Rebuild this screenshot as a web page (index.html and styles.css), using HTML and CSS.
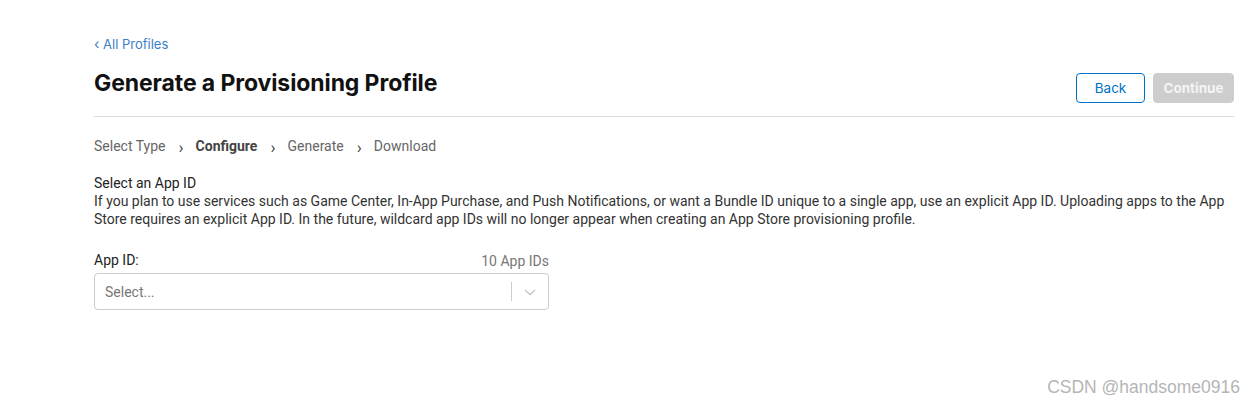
FILE: index.html
```html
<!DOCTYPE html>
<html>
<head>
<meta charset="utf-8">
<link rel="stylesheet" href="styles.css">
</head>
<body>
<div class="page">
  <a class="back-link" href="#"><span class="chev">‹</span> All Profiles</a>
  <div class="header">
    <h1 class="title">Generate a Provisioning Profile</h1>
    <div class="actions">
      <button class="btn btn-back">Back</button>
      <button class="btn btn-continue">Continue</button>
    </div>
  </div>
  <div class="steps">
    <span class="step">Select Type</span>
    <span class="sep">›</span>
    <span class="step current">Configure</span>
    <span class="sep">›</span>
    <span class="step">Generate</span>
    <span class="sep">›</span>
    <span class="step">Download</span>
  </div>
  <div class="section">
    <div class="section-title">Select an App ID</div>
    <p class="desc">If you plan to use services such as Game Center, In-App Purchase, and Push Notifications, or want a Bundle ID unique to a single app, use an explicit App ID. Uploading apps to the App Store requires an explicit App ID. In the future, wildcard app IDs will no longer appear when creating an App Store provisioning profile.</p>
  </div>
  <div class="field">
    <div class="field-head">
      <span class="label">App ID:</span>
      <span class="count">10 App IDs</span>
    </div>
    <div class="select">
      <span class="placeholder">Select...</span>
      <span class="indicator">
        <span class="divider"></span>
        <svg class="arrow" width="14" height="10" viewBox="0 0 14 10"><path d="M2 3 L7 7.5 L12 3" fill="none" stroke="#c8c8c8" stroke-width="1.5"/></svg>
      </span>
    </div>
  </div>
</div>
<div class="watermark">CSDN @handsome0916</div>
</body>
</html>
```
FILE: styles.css
```css
html, body {
  margin: 0;
  padding: 0;
  background: #fff;
}
body {
  font-family: Roboto, "Liberation Sans", sans-serif;
  color: #333;
  width: 1255px;
  height: 405px;
  position: relative;
  overflow: hidden;
}
.page {
  padding: 36px 21px 0 94px;
}
.back-link {
  display: block;
  font-family: Inter, Roboto, sans-serif;
  font-size: 13px;
  line-height: 16px;
  color: #3a7ec6;
  text-decoration: none;
}
.back-link .chev {
  font-size: 14px;
}
.header {
  display: flex;
  justify-content: space-between;
  align-items: flex-start;
  margin-top: 12px;
  border-bottom: 1px solid #dcdcdc;
  height: 52px;
}
.title {
  margin: 0;
  margin-top: 5px;
  font-family: Inter, sans-serif;
  font-size: 23px;
  font-weight: 700;
  line-height: 28px;
  color: #111;
  letter-spacing: -0.1px;
}
.actions {
  display: flex;
  gap: 8px;
  margin-top: 9px;
}
.btn {
  height: 30px;
  border-radius: 4px;
  font-family: Inter, Roboto, sans-serif;
  font-size: 13.5px;
  padding: 0;
}
.btn-back {
  width: 69px;
  background: #fff;
  border: 1px solid #0070c9;
  color: #0070c9;
}
.btn-continue {
  width: 81px;
  background: #cdcdcd;
  border: 1px solid #cdcdcd;
  color: #f4f4f4;
  font-weight: 700;
}
.steps {
  display: flex;
  align-items: center;
  margin-top: 20px;
  font-size: 14px;
  line-height: 18px;
  color: #666;
}
.step.current {
  color: #444;
  font-weight: 700;
}
.sep {
  font-size: 17px;
  margin: 0 12px 0 13px;
  color: #444;
  position: relative;
  top: 1px;
}
.section {
  margin-top: 19px;
}
.section-title {
  font-size: 14px;
  line-height: 18px;
  color: #222;
}
.desc {
  margin: 0;
  font-size: 14px;
  line-height: 18px;
  color: #333;
  max-width: 1140px;
}
.field {
  margin-top: 24px;
  width: 455px;
}
.field-head {
  display: flex;
  justify-content: space-between;
  align-items: flex-end;
  font-size: 14px;
  line-height: 16px;
}
.label {
  color: #222;
}
.count {
  color: #777;
  position: relative;
  top: 1px;
}
.select {
  margin-top: 5px;
  height: 37px;
  border: 1px solid #ccc;
  border-radius: 4px;
  display: flex;
  align-items: center;
  justify-content: space-between;
  box-sizing: border-box;
}
.placeholder {
  padding-left: 10px;
  font-size: 14px;
  color: #777;
}
.indicator {
  display: flex;
  align-items: center;
  height: 100%;
}
.divider {
  width: 1px;
  height: 19px;
  background: #ccc;
}
.arrow {
  margin: 0 11px 0 11px;
}
.watermark {
  position: absolute;
  right: 15px;
  bottom: 7px;
  font-family: "Liberation Sans", sans-serif;
  font-size: 17.5px;
  color: #b5b5b5;
}
```
